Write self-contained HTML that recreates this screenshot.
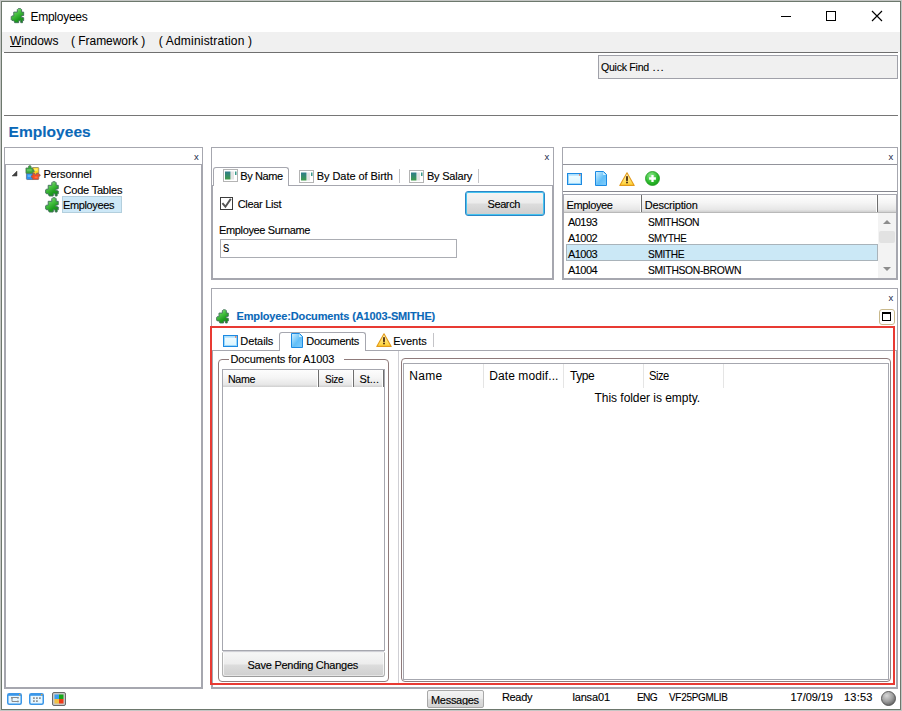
<!DOCTYPE html>
<html>
<head>
<meta charset="utf-8">
<title>Employees</title>
<style>
*{box-sizing:border-box;margin:0;padding:0}
html,body{width:902px;height:711px;overflow:hidden;background:#fff}
body{font-family:"Liberation Sans",sans-serif;font-size:11px;color:#000;position:relative}
.a{position:absolute}
.t{position:absolute;white-space:nowrap;line-height:20px;height:20px;transform-origin:0 0;-webkit-text-stroke:.12px currentColor}
.bd{position:absolute;border:1px solid #a6a7af}
.x{position:absolute;font-size:9.5px;line-height:10px;height:10px;color:#1b2a4a;font-weight:normal}
.hdr{position:absolute;background:linear-gradient(#fdfdfd 0%,#f5f5f5 45%,#e7e7e7 85%,#cfcfcf 100%)}
.sep{position:absolute;width:2px;border-left:1px solid #fff;border-right:1px solid #6e6e6e}
.btn{position:absolute;border:1px solid #9a9a9a;border-radius:3px;background:linear-gradient(#f6f6f6 0%,#ededed 46%,#dcdcdc 54%,#cfcfcf 100%);box-shadow:inset 0 0 0 1px rgba(255,255,255,.6)}
.ln{position:absolute;height:1px;background:#a6a7af}
.vl{position:absolute;width:1px;background:#c4c4c8}
svg{position:absolute;overflow:visible}
</style>
</head>
<body>
<svg width="0" height="0" style="left:0;top:0">
<defs>
<linearGradient id="gpz" x1=".2" y1="0" x2=".8" y2="1"><stop offset="0" stop-color="#b4f0ac"/><stop offset=".35" stop-color="#4cc445"/><stop offset=".7" stop-color="#1f9e1f"/><stop offset="1" stop-color="#168a16"/></linearGradient>
<linearGradient id="gwin" x1="0" y1="0" x2="0" y2="1"><stop offset="0" stop-color="#f4fdff"/><stop offset="1" stop-color="#d8f4ff"/></linearGradient>
<linearGradient id="gdoc" x1="0" y1="0" x2="1" y2="1"><stop offset="0" stop-color="#d6f2ff"/><stop offset=".55" stop-color="#62bff8"/><stop offset="1" stop-color="#84cdfa"/></linearGradient>
<linearGradient id="gwarn" x1="0" y1="0" x2="0" y2="1"><stop offset="0" stop-color="#fff8c0"/><stop offset="1" stop-color="#ffd030"/></linearGradient>
<radialGradient id="gplus" cx=".4" cy=".3" r=".8"><stop offset="0" stop-color="#8ee88e"/><stop offset=".6" stop-color="#2cba2c"/><stop offset="1" stop-color="#129212"/></radialGradient>
<radialGradient id="gsph" cx=".38" cy=".3" r=".75"><stop offset="0" stop-color="#d8d8d8"/><stop offset=".55" stop-color="#a0a0a0"/><stop offset="1" stop-color="#5c5c5c"/></radialGradient>
<linearGradient id="gtab" x1="0" y1="0" x2="0" y2="1"><stop offset="0" stop-color="#2f7d8c"/><stop offset="1" stop-color="#3f9a4a"/></linearGradient>
</defs>
</svg>

<!-- window frame -->
<div class="a" style="left:0;top:0;width:902px;height:711px;border:1px solid #c4c6c4"></div>
<div class="a" style="left:1px;top:1px;width:900px;height:709px;border:1px solid #6d786d"></div>

<!-- title bar -->
<svg style="left:10px;top:8px" width="15" height="15.5" viewBox="-.4 -.2 14.800 16.600"><path d="M6.800 4.200v-2.700l1-1h2.600l1 1v2.700h2.200v3.600l-2.600.5v1.400l2.600.5v3h-1.200v2.300h-1.900l-.3-2.400h-1.700l-.3 2.400h-4.200l-.9-2.400h-2l-.8-.8v-3.200l.7-.8h2v-4.100z" fill="url(#gpz)" stroke="#41705a" stroke-width="1" stroke-linejoin="round"/></svg>
<div class="t" style="left:30.4px;top:7px;font-size:12px;letter-spacing:-0.25px;-webkit-text-stroke:0">Employees</div>
<svg style="left:775px;top:6px" width="120" height="22" viewBox="0 0 120 22">
<path d="M6 10.500h10" stroke="#000" stroke-width="1" fill="none"/>
<rect x="51.500" y="5.500" width="9" height="9" stroke="#000" stroke-width="1" fill="none"/>
<path d="M97 5l10 10M107 5l-10 10" stroke="#000" stroke-width="1.150" fill="none"/>
</svg>

<!-- menu bar -->
<div class="a" style="left:2px;top:32px;width:898px;height:20px;background:#f0f0f0"></div>
<div class="t" style="left:10.0px;top:31px;font-size:12px;letter-spacing:-0.05px;-webkit-text-stroke:.05px"><u>W</u>indows</div><div class="t" style="left:71.1px;top:31px;font-size:12px;letter-spacing:-0.05px;-webkit-text-stroke:.05px">( Framework )</div><div class="t" style="left:158.7px;top:31px;font-size:12px;letter-spacing:0.2px;-webkit-text-stroke:.05px">( Administration )</div>
<div class="a" style="left:4px;top:52px;width:894px;height:1px;background:#6f6f6f"></div>

<!-- quick find -->
<div class="a" style="left:598px;top:55px;width:300px;height:24px;background:#f0f0f0;border:1px solid #a0a1a9"></div>
<div class="t" style="left:600.9px;top:57px;font-size:11.5px;letter-spacing:-0.3px;transform:scaleX(0.921);">Quick Find</div><div class="t" style="left:652.4px;top:57px;font-size:11.5px;letter-spacing:0.9px;">...</div>

<div class="a" style="left:4px;top:115px;width:894px;height:1px;background:#767676"></div>
<div class="t" style="left:8.5px;top:122px;font-size:15.5px;font-weight:bold;color:#0a68b8;letter-spacing:0.05px;">Employees</div>

<!-- left panel -->
<div class="bd" style="left:4px;top:147px;width:199px;height:542px"></div>
<div class="bd" style="left:5px;top:164px;width:197px;height:524px"></div>
<div class="x" style="left:194px;top:152px">x</div>
<svg style="left:12px;top:171px" width="5" height="5" viewBox="0 0 5 5"><path d="M5 0v5h-5z" fill="#404040" stroke="#404040" stroke-width=".5"/></svg>
<svg style="left:25px;top:165px" width="15.4" height="15.6" viewBox="0 0 16 16">
<path d="M8 2.500h5.500q.8 0 .8.800v5.200h-2.200q.4 1.600-1 1.600t-1-1.600h-2.100z" fill="#ffd71a" stroke="#8a8460" stroke-width=".8"/>
<path d="M1.500 8.500h6.500v6.500h-5.700q-.8 0-.8-.8z" fill="#2b91f1" stroke="#5a6f92" stroke-width=".8"/>
<path d="M8 8.500h2.100q-.4 1.600 1 1.600t1-1.600h2.200v1.200q1.500-.4 1.500.9t-1.500.9v2.700q0 .8-.8.800h-5.500v-2q-1.600.5-1.600-1t1.600-1z" fill="#f94c22" stroke="#8a5f58" stroke-width=".8"/>
<path d="M1 3h2.600q-.4-2.600 1.400-2.600t1.400 2.600h1.600v2q1.800-.6 1.800 1t-1.800 1v1.500h-7z" fill="#36a93a" stroke="#4f7858" stroke-width=".8"/>
<path d="M2 4h5v2.500h-5z" fill="#8fe08a" opacity=".45"/><path d="M9.500 3.500h3.500v2.500h-3.500z" fill="#fff6a8" opacity=".6"/><path d="M2.800 10h3.500v2.500h-3.500z" fill="#8cd0ff" opacity=".5"/><path d="M10 11.800h3v1.700h-3z" fill="#ff9a70" opacity=".5"/>
</svg>
<div class="t" style="left:43.4px;top:164px;font-size:11px;letter-spacing:-0.15px;">Personnel</div>
<svg style="left:45px;top:181px" width="14" height="16" viewBox="-.4 -.2 14.800 16.600"><path d="M6.800 4.200v-2.700l1-1h2.600l1 1v2.700h2.200v3.600l-2.600.5v1.400l2.600.5v3h-1.200v2.300h-1.900l-.3-2.400h-1.700l-.3 2.400h-4.200l-.9-2.400h-2l-.8-.8v-3.200l.7-.8h2v-4.100z" fill="url(#gpz)" stroke="#41705a" stroke-width="1" stroke-linejoin="round"/></svg>
<div class="t" style="left:63.5px;top:180px;font-size:11px;letter-spacing:-0.2px;">Code Tables</div>
<svg style="left:45px;top:197px" width="14" height="16" viewBox="-.4 -.2 14.800 16.600"><path d="M6.800 4.200v-2.700l1-1h2.600l1 1v2.700h2.200v3.600l-2.600.5v1.400l2.600.5v3h-1.200v2.300h-1.900l-.3-2.400h-1.700l-.3 2.400h-4.200l-.9-2.400h-2l-.8-.8v-3.200l.7-.8h2v-4.100z" fill="url(#gpz)" stroke="#41705a" stroke-width="1" stroke-linejoin="round"/></svg>
<div class="a" style="left:62px;top:196px;width:60px;height:17px;background:#cde8f7;border:1px solid #b3cfdd"></div>
<div class="t" style="left:62.9px;top:195px;font-size:11px;letter-spacing:-0.35px;">Employees</div>

<!-- search panel -->
<div class="bd" style="left:211px;top:147px;width:343px;height:133px"></div>
<div class="bd" style="left:212px;top:185px;width:341px;height:94px"></div>
<div class="x" style="left:544.5px;top:152px">x</div>
<div class="a" style="left:213px;top:167px;width:76px;height:19px;background:#fff;border:1px solid #a6a7af;border-bottom:none;border-radius:3px 3px 0 0"></div>
<svg style="left:223px;top:169px" width="15" height="13" viewBox="0 0 15 13"><rect x=".5" y=".5" width="14" height="12" fill="#fff" stroke="#b4b4b4"/><rect x="2" y="2.500" width="5.500" height="8" fill="url(#gtab)"/><rect x="8" y="2.500" width="3" height="8" fill="#e4e4e4"/><rect x="12" y="2.500" width="1.500" height="3.500" fill="#3a9a8a"/></svg>
<div class="t" style="left:240.3px;top:166px;font-size:11px;letter-spacing:-0.4px;">By Name</div>
<svg style="left:299px;top:170px" width="15" height="13" viewBox="0 0 15 13"><rect x=".5" y=".5" width="14" height="12" fill="#fff" stroke="#b4b4b4"/><rect x="2" y="2.500" width="5.500" height="8" fill="url(#gtab)"/><rect x="8" y="2.500" width="3" height="8" fill="#e4e4e4"/><rect x="12" y="2.500" width="1.500" height="3.500" fill="#3a9a8a"/></svg>
<div class="t" style="left:316.7px;top:166px;font-size:11px;letter-spacing:-0.05px;">By Date of Birth</div>
<div class="vl" style="left:399px;top:169px;height:14px"></div>
<svg style="left:409px;top:170px" width="15" height="13" viewBox="0 0 15 13"><rect x=".5" y=".5" width="14" height="12" fill="#fff" stroke="#b4b4b4"/><rect x="2" y="2.500" width="5.500" height="8" fill="url(#gtab)"/><rect x="8" y="2.500" width="3" height="8" fill="#e4e4e4"/><rect x="12" y="2.500" width="1.500" height="3.500" fill="#3a9a8a"/></svg>
<div class="t" style="left:426.9px;top:166px;font-size:11px;letter-spacing:-0.2px;">By Salary</div>
<div class="vl" style="left:478px;top:169px;height:14px"></div>
<div class="a" style="left:220px;top:197px;width:13px;height:13px;border:1px solid #3c3c3c;background:#fff"></div>
<svg style="left:220px;top:197px" width="13" height="13" viewBox="0 0 13 13"><path d="M2.400 6.200l3 3.500 5.400-7.800" stroke="#555" stroke-width="1.900" fill="none"/></svg>
<div class="t" style="left:237.7px;top:194px;font-size:11px;letter-spacing:-0.3px;">Clear List</div>
<div class="a" style="left:465px;top:191px;width:80px;height:25px;border:1px solid #2c86c6;border-radius:3px;background:linear-gradient(#f4f4f4 0%,#ececec 46%,#dcdcdc 54%,#cecece 100%);box-shadow:inset 0 0 0 1px #46c4f0"></div>
<div class="t" style="left:487.5px;top:194px;font-size:11px;letter-spacing:-0.4px;">Search</div>
<div class="t" style="left:219.0px;top:220px;font-size:11px;letter-spacing:-0.35px;">Employee Surname</div>
<div class="a" style="left:220px;top:239px;width:237px;height:19px;border:1px solid #abadb3;background:#fff"></div>
<div class="t" style="left:222.6px;top:238px;font-size:11px;transform:scaleX(0.85);">S</div>

<!-- list panel -->
<div class="bd" style="left:562px;top:147px;width:336px;height:133px"></div>
<div class="x" style="left:888.5px;top:152px">x</div>
<div class="ln" style="left:563px;top:164px;width:334px;background:#92939b"></div>
<div class="ln" style="left:563px;top:191px;width:334px;background:#85868e"></div>
<svg style="left:567px;top:173px" width="15" height="12" viewBox="0 0 15 12"><rect x=".5" y=".5" width="14" height="11" fill="url(#gwin)" stroke="#1c8ae2"/><rect x="1.500" y="1.500" width="12" height="9" fill="none" stroke="#9ad8fb"/><rect x="2" y="1.500" width="11" height="1.500" fill="#bfe8ff"/><rect x="12" y="1.300" width="1.500" height="1.300" fill="#f0643a"/></svg>
<svg style="left:595px;top:171px" width="12" height="15" viewBox="0 0 12 15"><path d="M.5.500h8l3 3v11h-11z" fill="url(#gdoc)" stroke="#1c8ae2"/><path d="M8.200 1.200v2.800h2.800z" fill="#d8f2ff"/></svg>
<svg style="left:619px;top:172px" width="16" height="14" viewBox="0 0 16 14"><path d="M8 .8l7.200 12.600h-14.400z" fill="url(#gwarn)" stroke="#e39a1a" stroke-width="1.100" stroke-linejoin="round"/><rect x="7.100" y="4.200" width="1.800" height="4.700" fill="#4a2a10"/><rect x="7.100" y="9.700" width="1.800" height="1.600" fill="#4a2a10"/></svg>
<svg style="left:645px;top:171px" width="15" height="15" viewBox="0 0 15 15"><circle cx="7.500" cy="7.500" r="7" fill="url(#gplus)" stroke="#1f9a1f" stroke-width=".8"/><path d="M7.500 4.100v6.800M4.100 7.500h6.800" stroke="#fff" stroke-width="2.300"/></svg>
<div class="bd" style="left:563px;top:194px;width:334px;height:85px"></div>
<div class="hdr" style="left:564px;top:195px;width:332px;height:17px"></div>
<div class="ln" style="left:564px;top:212px;width:332px;background:#b9b9b9"></div>
<div class="sep" style="left:640px;top:195px;height:17px"></div>
<div class="sep" style="left:876px;top:195px;height:17px"></div>
<div class="t" style="left:566.5px;top:195px;font-size:11px;letter-spacing:-0.35px;">Employee</div><div class="t" style="left:644.8px;top:195px;font-size:11px;letter-spacing:-0.2px;">Description</div>
<div class="a" style="left:566px;top:244px;width:312px;height:17px;background:#cbe8f6;border:1px solid #a9b3ba"></div>
<div class="a" style="left:878px;top:213px;width:18px;height:65px;background:#f3f3f3"></div>
<div class="a" style="left:879px;top:231px;width:16px;height:12px;background:#e2e2e2;border-radius:2px"></div>
<svg style="left:883px;top:220px" width="8" height="4" viewBox="0 0 8 4"><path d="M0 4l4-4 4 4z" fill="#8c8c8c"/></svg>
<svg style="left:883px;top:267px" width="8" height="4" viewBox="0 0 8 4"><path d="M0 0l4 4 4-4z" fill="#8c8c8c"/></svg>
<div class="t" style="left:568.0px;top:212px;font-size:11px;letter-spacing:-0.55px;">A0193</div><div class="t" style="left:647.8px;top:212px;font-size:11px;letter-spacing:-0.45px;transform:scaleX(0.938);">SMITHSON</div><div class="t" style="left:568.0px;top:228px;font-size:11px;letter-spacing:-0.55px;">A1002</div><div class="t" style="left:647.8px;top:228px;font-size:11px;letter-spacing:-0.35px;transform:scaleX(0.875);">SMYTHE</div><div class="t" style="left:568.0px;top:244px;font-size:11px;letter-spacing:-0.55px;">A1003</div><div class="t" style="left:647.8px;top:244px;font-size:11px;letter-spacing:-0.4px;transform:scaleX(0.923);">SMITHE</div><div class="t" style="left:568.0px;top:260px;font-size:11px;letter-spacing:-0.55px;">A1004</div><div class="t" style="left:647.8px;top:260px;font-size:11px;letter-spacing:-0.35px;transform:scaleX(0.94);">SMITHSON-BROWN</div>

<!-- detail panel -->
<div class="bd" style="left:211px;top:288px;width:687px;height:401px"></div>
<div class="x" style="left:888.5px;top:293px">x</div>
<div class="a" style="left:879px;top:309px;width:16px;height:16px;border:1px solid #c9b98c;border-radius:3px;background:#fff"></div>
<div class="a" style="left:882px;top:312px;width:9px;height:9px;border:1px solid #000;border-top-width:2px"></div>
<svg style="left:216px;top:309px" width="13" height="15" viewBox="-.4 -.2 14.800 16.600"><path d="M6.800 4.200v-2.700l1-1h2.600l1 1v2.700h2.200v3.600l-2.600.5v1.400l2.600.5v3h-1.200v2.300h-1.900l-.3-2.400h-1.700l-.3 2.400h-4.200l-.9-2.400h-2l-.8-.8v-3.200l.7-.8h2v-4.100z" fill="url(#gpz)" stroke="#41705a" stroke-width="1" stroke-linejoin="round"/></svg>
<div class="t" style="left:236.5px;top:306px;font-size:11px;font-weight:bold;color:#0a68b8;letter-spacing:-0.15px;">Employee:Documents (A1003-SMITHE)</div>
<!-- tab strip -->
<div class="bd" style="left:212px;top:350px;width:685px;height:338px;border-top-color:#a6a7af"></div>
<div class="a" style="left:279px;top:332px;width:87px;height:19px;background:#fff;border:1px solid #a6a7af;border-bottom:none;border-radius:3px 3px 0 0"></div>
<svg style="left:223px;top:335px" width="15" height="12" viewBox="0 0 15 12"><rect x=".5" y=".5" width="14" height="11" fill="url(#gwin)" stroke="#1c8ae2"/><rect x="1.500" y="1.500" width="12" height="9" fill="none" stroke="#9ad8fb"/><rect x="2" y="1.500" width="11" height="1.500" fill="#bfe8ff"/><rect x="12" y="1.300" width="1.500" height="1.300" fill="#f0643a"/></svg>
<div class="t" style="left:240.3px;top:331px;font-size:11px;letter-spacing:-0.1px;">Details</div>
<svg style="left:291px;top:333px" width="12" height="15" viewBox="0 0 12 15"><path d="M.5.500h8l3 3v11h-11z" fill="url(#gdoc)" stroke="#1c8ae2"/><path d="M8.200 1.200v2.800h2.800z" fill="#d8f2ff"/></svg>
<div class="t" style="left:306.3px;top:331px;font-size:11px;letter-spacing:-0.35px;">Documents</div>
<svg style="left:376px;top:333px" width="16" height="14" viewBox="0 0 16 14"><path d="M8 .8l7.200 12.600h-14.400z" fill="url(#gwarn)" stroke="#e39a1a" stroke-width="1.100" stroke-linejoin="round"/><rect x="7.100" y="4.200" width="1.800" height="4.700" fill="#4a2a10"/><rect x="7.100" y="9.700" width="1.800" height="1.600" fill="#4a2a10"/></svg>
<div class="t" style="left:393.3px;top:331px;font-size:11px;letter-spacing:-0.05px;">Events</div>
<div class="vl" style="left:433px;top:333px;height:14px"></div>
<!-- left groupbox -->
<div class="a" style="left:218px;top:359px;width:171px;height:323px;border:1px solid #8f7b7b;border-radius:4px"></div>
<div class="a" style="left:229px;top:355px;width:115px;height:10px;background:#fff"></div>
<div class="t" style="left:230.5px;top:349px;font-size:11px;letter-spacing:-0.1px;">Documents for A1003</div>
<div class="bd" style="left:222px;top:369px;width:163px;height:282px;background:#fff"></div>
<div class="hdr" style="left:223px;top:370px;width:161px;height:17px"></div>
<div class="sep" style="left:317px;top:370px;height:17px"></div>
<div class="sep" style="left:352px;top:370px;height:17px"></div>
<div class="sep" style="left:382px;top:370px;height:17px"></div>
<div class="t" style="left:227.6px;top:369px;font-size:11px;letter-spacing:-0.35px;transform:scaleX(0.969);">Name</div><div class="t" style="left:324.6px;top:369px;font-size:11px;letter-spacing:-0.3px;transform:scaleX(0.907);">Size</div><div class="t" style="left:359.4px;top:369px;font-size:11px;">St...</div>
<div class="a" style="left:223px;top:651px;width:161px;height:1px;background:#d0d0d6"></div><div class="btn" style="left:222px;top:652px;width:163px;height:25px;border-color:#f2f2f2 #b2b2b2 #9c9c9c #b2b2b2;border-radius:0 0 3px 3px;box-shadow:inset 1px 0 0 rgba(255,255,255,.7),inset -1px 0 0 rgba(255,255,255,.7),inset 0 -1px 0 rgba(255,255,255,.45)"></div>
<div class="t" style="left:247.5px;top:655px;font-size:11px;letter-spacing:-0.25px;">Save Pending Changes</div>
<!-- splitter -->
<div class="vl" style="left:398px;top:351px;height:332px;background:#cfcfd4"></div>
<!-- right groupbox -->
<div class="a" style="left:401px;top:358px;width:490px;height:324px;border:1px solid #8f7b7b;border-radius:4px"></div>
<div class="bd" style="left:403px;top:363px;width:486px;height:317px;background:#fff"></div>
<div class="vl" style="left:483px;top:364px;height:24px;background:#e5e5e5"></div>
<div class="vl" style="left:563px;top:364px;height:24px;background:#e5e5e5"></div>
<div class="vl" style="left:643px;top:364px;height:24px;background:#e5e5e5"></div>
<div class="vl" style="left:723px;top:364px;height:24px;background:#e5e5e5"></div>
<div class="t" style="left:409.3px;top:366px;font-size:12px;letter-spacing:0.25px;-webkit-text-stroke:0">Name</div><div class="t" style="left:489.2px;top:366px;font-size:12px;letter-spacing:0.1px;-webkit-text-stroke:0">Date modif...</div><div class="t" style="left:570.1px;top:366px;font-size:12px;letter-spacing:-0.5px;-webkit-text-stroke:0">Type</div><div class="t" style="left:649.4px;top:366px;font-size:12px;letter-spacing:-0.5px;transform:scaleX(0.931);-webkit-text-stroke:0">Size</div><div class="t" style="left:594.6px;top:388px;font-size:12px;letter-spacing:-0.05px;-webkit-text-stroke:0">This folder is empty.</div>
<!-- red focus frame -->
<div class="a" style="left:210px;top:326px;width:685px;height:359px;border:2px solid #e83a33"></div>

<!-- status bar -->
<svg style="left:7px;top:693px" width="15" height="12" viewBox="0 0 15 12"><rect x=".75" y=".75" width="13.500" height="10.500" rx="1.500" fill="#e6f6ff" stroke="#3a96e8" stroke-width="1.500"/><rect x="1" y="1" width="13" height="1.800" fill="#3a96e8"/><rect x="12" y="1" width="1.300" height="1.200" fill="#f0a030"/><path d="M4.500 4.500h6.500M5 4.500v4h6" stroke="#8a8a8a" stroke-width="1" fill="none"/><rect x="4" y="4" width="1.800" height="1.500" fill="#8a8a8a"/><rect x="10" y="4" width="1.800" height="1.500" fill="#8a8a8a"/><rect x="10" y="7.700" width="1.800" height="1.500" fill="#8a8a8a"/></svg>
<svg style="left:29px;top:693px" width="15" height="12" viewBox="0 0 15 12"><rect x=".75" y=".75" width="13.500" height="10.500" rx="1.500" fill="#e6f6ff" stroke="#3a96e8" stroke-width="1.500"/><rect x="1" y="1" width="13" height="1.800" fill="#3a96e8"/><rect x="12" y="1" width="1.300" height="1.200" fill="#f0a030"/><rect x="4" y="4.300" width="1.800" height="1.600" fill="#8a8a8a"/><rect x="7" y="4.300" width="1.800" height="1.600" fill="#8a8a8a"/><rect x="10" y="4.300" width="1.800" height="1.600" fill="#8a8a8a"/><rect x="4" y="7.300" width="1.800" height="1.600" fill="#8a8a8a"/><rect x="7" y="7.300" width="1.800" height="1.600" fill="#8a8a8a"/></svg>
<svg style="left:52px;top:692px" width="14" height="14" viewBox="0 0 14 14"><rect x=".5" y=".5" width="13" height="13" rx="1.500" fill="#c6c6c6" stroke="#6a6a6a"/><rect x="2.500" y="2.500" width="4.500" height="4.500" fill="#3a9cf0"/><rect x="7" y="2.500" width="4.500" height="4.500" fill="#18a818"/><rect x="2.500" y="7" width="4.500" height="4.500" fill="#f2c244"/><rect x="7" y="7" width="4.500" height="4.500" fill="#f03a18"/></svg>
<div class="a" style="left:427px;top:690px;width:57px;height:18px;border:1px solid #a8a8a8;border-radius:2px;background:linear-gradient(#f4f4f4 0%,#ebebeb 46%,#dddddd 54%,#d2d2d2 100%);overflow:hidden"></div>
<div class="a" style="left:428px;top:691px;width:55px;height:14px;overflow:hidden"><div class="t" style="left:430.6px;top:690px;font-size:11px;letter-spacing:-0.3px;left:3px;top:-1px">Messages</div></div>
<div class="t" style="left:501.9px;top:687px;font-size:11px;letter-spacing:-0.3px;">Ready</div><div class="t" style="left:572.4px;top:687px;font-size:11px;letter-spacing:-0.15px;">lansa01</div><div class="t" style="left:636.5px;top:687px;font-size:11px;letter-spacing:-0.8px;transform:scaleX(0.926);">ENG</div><div class="t" style="left:669.4px;top:687px;font-size:11px;letter-spacing:-0.3px;transform:scaleX(0.902);">VF25PGMLIB</div><div class="t" style="left:790.5px;top:687px;font-size:11px;letter-spacing:-0.05px;">17/09/19</div><div class="t" style="left:844.0px;top:687px;font-size:11px;letter-spacing:0.2px;">13:53</div>
<svg style="left:881px;top:691px" width="15" height="15" viewBox="0 0 15 15"><circle cx="7.500" cy="7.500" r="7" fill="url(#gsph)" stroke="#505050" stroke-width=".9"/></svg>
</body>
</html>
